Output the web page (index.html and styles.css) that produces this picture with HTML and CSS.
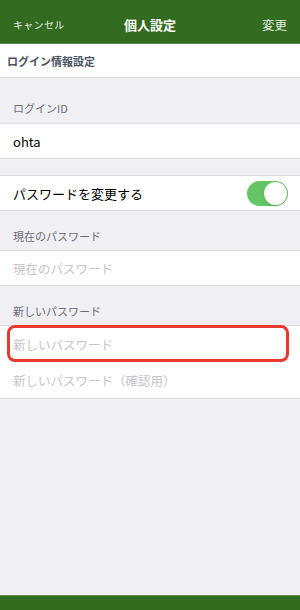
FILE: index.html
```html
<!DOCTYPE html>
<html lang="ja">
<head>
<meta charset="utf-8">
<link rel="stylesheet" href="styles.css">
</head>
<body>
<div class="app">
  <header class="nav">
    <span class="nav-left">キャンセル</span>
    <span class="nav-title">個人設定</span>
    <span class="nav-right">変更</span>
  </header>
  <div class="section-title">ログイン情報設定</div>
  <main class="content">
    <div class="group-label first">ログインID</div>
    <div class="cell single"><span class="value">ohta</span></div>
    <div class="spacer"></div>
    <div class="cell single switch-cell">
      <span class="value">パスワードを変更する</span>
      <span class="switch"><span class="knob"></span></span>
    </div>
    <div class="group-label">現在のパスワード</div>
    <div class="cell single"><span class="placeholder">現在のパスワード</span></div>
    <div class="group-label">新しいパスワード</div>
    <div class="group">
      <div class="cell focused"><span class="placeholder">新しいパスワード</span><span class="focus-ring"></span></div>
      <div class="cell"><span class="placeholder">新しいパスワード（確認用）</span></div>
    </div>
  </main>
  <footer class="tabbar"></footer>
</div>
</body>
</html>
```
FILE: styles.css
```css
* { box-sizing: border-box; margin: 0; padding: 0; }
html, body { width: 300px; height: 610px; overflow: hidden; }
body {
  font-family: "Noto Sans CJK JP", "Noto Sans", sans-serif;
  background: #efeff4;
  color: #000;
}
.app { display: flex; flex-direction: column; height: 610px; }
.nav {
  height: 44px;
  background: #336b20;
  border-bottom: 1px solid #5b8a4c;
  display: flex;
  align-items: center;
  justify-content: space-between;
  padding: 6px 13px 0 13px;
  color: #fff;
  position: relative;
}
.nav-left { font-size: 10px; color: #e6eee2; letter-spacing: 0.3px; }
.nav-title {
  position: absolute; left: 0; right: 0; top: 6px; bottom: 0;
  display: flex; align-items: center; justify-content: center;
  font-size: 13px; font-weight: 700; pointer-events: none;
}
.nav-right { font-size: 12.5px; color: #e6eee2; }
.section-title {
  height: 34px;
  background: #fff;
  border-bottom: 1px solid #d8d8de;
  padding-left: 7px;
  display: flex; align-items: center;
  font-size: 11px; font-weight: 700; color: #4b5263;
}
.content { flex: 1; display: flex; flex-direction: column; }
.group-label {
  height: 39px;
  padding: 0 13px 6px;
  display: flex; align-items: flex-end;
  font-size: 11px; color: #6d6d72;
}
.group-label.first { height: 45px; padding-bottom: 7px; }
.spacer { height: 16px; }
.group { background: #fff; border-top: 1px solid #dcdce0; border-bottom: 1px solid #dcdce0; }
.cell {
  height: 36px;
  background: #fff;
  display: flex; align-items: center;
  padding: 0 13px;
  position: relative;
}
.cell.single { border-top: 1px solid #dcdce0; border-bottom: 1px solid #dcdce0; }
.group .cell { height: 36px; }
.value { font-size: 13px; color: #000; }
.placeholder { font-size: 12.5px; color: #c4c4c9; }
.switch-cell { justify-content: space-between; padding-right: 12px; }
.switch {
  width: 41px; height: 25px;
  border-radius: 13px;
  background: #65c466;
  position: relative;
}
.knob {
  position: absolute; right: 1px; top: 1px;
  width: 23px; height: 23px; border-radius: 50%;
  background: #fff;
  box-shadow: 0 1px 2px rgba(0,0,0,0.2);
}
.focus-ring {
  position: absolute; left: 7px; right: 11px; top: -1px; bottom: 0;
  border: 3px solid #e9392f;
  border-radius: 8px;
}
.tabbar {
  height: 15px;
  background: #316b1e;
  border-top: 1px solid #5f8c55;
}
```
